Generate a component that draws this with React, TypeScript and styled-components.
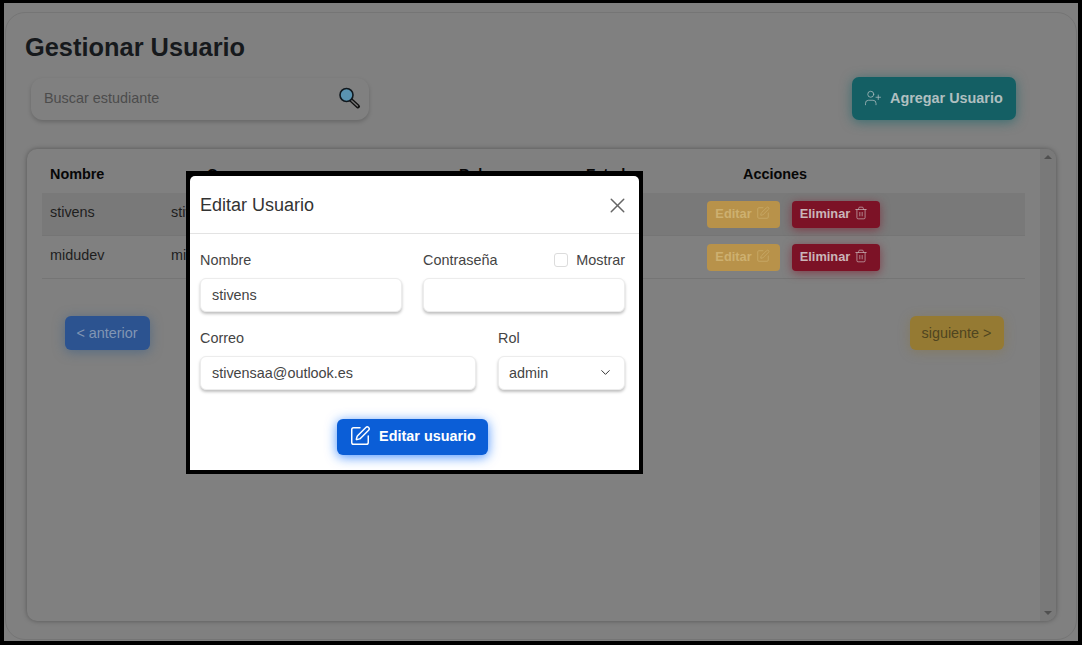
import React from 'react';
import styled, { createGlobalStyle } from 'styled-components';
import { ChevronDown, SquarePen, Trash2, UserPlus, X } from 'lucide-react';

const GlobalStyle = createGlobalStyle`
  * { box-sizing: border-box; }
  html, body { margin: 0; padding: 0; height: 100%; }
  body {
    background: #808080;
    font-family: "Liberation Sans", Arial, sans-serif;
  }
`;

const Frame = styled.div`
  position: relative;
  width: 1082px;
  height: 645px;
  overflow: hidden;
  background: #808080;
  border-style: solid;
  border-color: #000;
  border-width: 3px 4px 4px 4px;
  padding: 9px 1px 1px 1px;
`;

const Card = styled.main`
  height: 100%;
  border: 1px solid #757575;
  border-radius: 20px;
  padding: 19px 0 0 19px;
`;

const Title = styled.h1`
  margin: 0;
  font-size: 25.4px;
  line-height: 30px;
  font-weight: 700;
  color: #16191c;
`;

const Toolbar = styled.div`
  display: flex;
  justify-content: space-between;
  align-items: flex-start;
  margin-top: 15px;
  padding: 0 60px 0 6px;
`;

const SearchBox = styled.div`
  display: flex;
  align-items: center;
  justify-content: space-between;
  width: 338px;
  height: 42px;
  margin-top: 1px;
  padding: 0 8px 2px 13px;
  border-radius: 12px;
  box-shadow: 0 2px 4px rgba(0, 0, 0, 0.2);
  font-size: 14.4px;
  color: #4c4c4c;
`;

const AddButton = styled.button`
  display: flex;
  align-items: center;
  gap: 8px;
  width: 164px;
  height: 43px;
  padding: 0 0 2px 12px;
  border: 0;
  border-radius: 7px;
  background: #145f64;
  box-shadow: 0 2px 12px rgba(20, 100, 105, 0.65);
  color: #b0bfc0;
  font: 700 14.4px "Liberation Sans", Arial, sans-serif;
`;

const Panel = styled.section`
  display: flex;
  height: 472px;
  margin: 29px 20px 0 2px;
  border-radius: 10px;
  box-shadow: 0 0 5px rgba(0, 0, 0, 0.35);
  overflow: hidden;
`;

const PanelBody = styled.div`
  flex: 1;
  padding: 11px 15px 0;
`;

const Scrollbar = styled.div`
  display: flex;
  flex-direction: column;
  justify-content: space-between;
  align-items: center;
  width: 16px;
  padding: 6px 0;
  background: #797979;
`;

const Arrow = styled.span<{ $down?: boolean }>`
  width: 0;
  height: 0;
  border-left: 4px solid transparent;
  border-right: 4px solid transparent;
  ${(p) => (p.$down ? 'border-top: 4px solid #505050;' : 'border-bottom: 4px solid #505050;')}
`;

const HeadRow = styled.div`
  display: grid;
  grid-template-columns: 157px 252px 127px 157px 1fr;
  align-items: center;
  height: 33px;
  padding: 0 0 6px 8px;
  font-size: 14.4px;
  font-weight: 700;
  color: #070707;
`;

const Row = styled.div<{ $shaded?: boolean }>`
  display: grid;
  grid-template-columns: 121px 230px 100px 206px 1fr;
  align-items: center;
  height: 43px;
  padding: 0 0 0 8px;
  border-bottom: 1px solid #757575;
  background: ${(p) => (p.$shaded ? '#797979' : 'transparent')};
  font-size: 14.4px;
  color: #1e1e1e;
`;

const Cell = styled.span`
  margin-bottom: 4px;
`;

const Actions = styled.div`
  display: flex;
  gap: 12px;
`;

const ActionButton = styled.button<{ $tone: 'edit' | 'delete' }>`
  display: flex;
  align-items: center;
  justify-content: center;
  gap: 4px;
  width: ${(p) => (p.$tone === 'edit' ? '73px' : '88px')};
  height: 27px;
  padding: 0 ${(p) => (p.$tone === 'edit' ? '2px' : '4px')} 2px 0;
  border: 0;
  border-radius: 4px;
  background: ${(p) => (p.$tone === 'edit' ? '#b8924a' : '#7c1226')};
  box-shadow: ${(p) => (p.$tone === 'edit' ? 'none' : '0 2px 10px rgba(130, 20, 40, 0.6)')};
  color: ${(p) => (p.$tone === 'edit' ? '#cdb070' : '#cab6b9')};
  font: 700 12.8px "Liberation Sans", Arial, sans-serif;
`;

const Pager = styled.div`
  display: flex;
  justify-content: space-between;
  margin-top: 37px;
  padding: 0 21px 0 23px;
`;

const PageButton = styled.button<{ $next?: boolean }>`
  width: ${(p) => (p.$next ? '94px' : '85px')};
  height: 34px;
  padding: 0 ${(p) => (p.$next ? '1px' : '1px')} 0 0;
  border: 0;
  border-radius: 6px;
  background: ${(p) => (p.$next ? '#957a33' : '#2c5390')};
  box-shadow: 0 2px 12px ${(p) => (p.$next ? 'rgba(140, 115, 50, 0.4)' : 'rgba(40, 85, 135, 0.5)')};
  color: ${(p) => (p.$next ? '#4f4520' : '#8296b4')};
  font: 14.4px "Liberation Sans", Arial, sans-serif;
`;

const Modal = styled.div`
  position: absolute;
  left: 182px;
  top: 168px;
  width: 457px;
  height: 303px;
  background: #000;
  padding: 5px 4px 4px;
`;

const ModalInner = styled.form`
  height: 100%;
  border-radius: 5px 5px 0 0;
  background: #fff;
`;

const ModalHeader = styled.header`
  display: flex;
  align-items: center;
  justify-content: space-between;
  height: 58px;
  padding: 1px 9px 0 10px;
  border-bottom: 1px solid #e3e3e3;
  font-size: 18px;
  color: #333;
`;

const ModalBody = styled.div`
  display: flex;
  flex-direction: column;
  gap: 15px;
  padding: 15px 14px 0 10px;
`;

const FieldRow = styled.div<{ $columns: string; $gap: number }>`
  display: grid;
  grid-template-columns: ${(p) => p.$columns};
  column-gap: ${(p) => p.$gap}px;
`;

const LabelLine = styled.div`
  display: flex;
  align-items: center;
  justify-content: space-between;
  height: 20px;
  margin-bottom: 9px;
  padding-top: 1px;
  font-size: 14.4px;
  color: #444;
`;

const ShowToggle = styled.span`
  display: flex;
  align-items: center;
  gap: 8px;
`;

const Checkbox = styled.span`
  width: 14px;
  height: 14px;
  margin-left: -1px;
  border: 1px solid #dcdcdc;
  border-radius: 3px;
`;

const TextBox = styled.div`
  display: flex;
  align-items: center;
  justify-content: space-between;
  height: 34px;
  padding: 0 11px 1px;
  border: 1px solid #ececec;
  border-radius: 6px;
  background: #fff;
  box-shadow: 0 2px 3px rgba(0, 0, 0, 0.25);
  font-size: 14.4px;
  color: #444;
`;

const SelectBox = styled(TextBox)`
  padding-left: 10px;
`;

const SubmitRow = styled.div`
  display: flex;
  justify-content: center;
  margin-top: 29px;
  padding-right: 4px;
`;

const SubmitButton = styled.button`
  display: flex;
  align-items: center;
  justify-content: center;
  gap: 8px;
  width: 151px;
  height: 36px;
  padding: 0 0 2px;
  border: 0;
  border-radius: 6px;
  background: #0b5ed7;
  box-shadow: 0 2px 12px rgba(13, 110, 253, 0.75);
  color: #fff;
  font: 700 14.4px "Liberation Sans", Arial, sans-serif;
`;

const SearchIcon = () => (
  <svg width="24" height="24" viewBox="0 0 24 24">
    <line x1="14" y1="14" x2="21" y2="20.5" stroke="#111" strokeWidth="4" strokeLinecap="round" />
    <line x1="14.5" y1="14.5" x2="20.5" y2="20" stroke="#777" strokeWidth="1.4" strokeLinecap="round" />
    <circle cx="9.5" cy="9" r="6.5" fill="#5a93b0" stroke="#10181e" strokeWidth="1.6" />
  </svg>
);

const usuarios = [
  { nombre: 'stivens', correo: 'stivensaa@outlook.es', rol: 'admin', estado: 'Activo', shaded: true },
  { nombre: 'midudev', correo: 'midudev@gmail.com', rol: 'admin', estado: 'Activo', shaded: false },
];

const App: React.FC = () => {
  return (
    <Frame>
      <GlobalStyle />
      <Card>
        <Title>Gestionar Usuario</Title>
        <Toolbar>
          <SearchBox>
            Buscar estudiante
            <SearchIcon />
          </SearchBox>
          <AddButton>
            <UserPlus size={18} strokeWidth={1} />
            Agregar Usuario
          </AddButton>
        </Toolbar>
        <Panel>
          <PanelBody>
            <HeadRow>
              <span>Nombre</span>
              <span>Correo</span>
              <span>Rol</span>
              <span>Estado</span>
              <span>Acciones</span>
            </HeadRow>
            {usuarios.map((u) => (
              <Row key={u.nombre} $shaded={u.shaded}>
                <Cell>{u.nombre}</Cell>
                <Cell>{u.correo}</Cell>
                <Cell>{u.rol}</Cell>
                <Cell>{u.estado}</Cell>
                <Actions>
                  <ActionButton $tone="edit">
                    Editar <SquarePen size={14} strokeWidth={1.2} />
                  </ActionButton>
                  <ActionButton $tone="delete">
                    Eliminar <Trash2 size={14} strokeWidth={1.2} />
                  </ActionButton>
                </Actions>
              </Row>
            ))}
            <Pager>
              <PageButton>&lt; anterior</PageButton>
              <PageButton $next>siguiente &gt;</PageButton>
            </Pager>
          </PanelBody>
          <Scrollbar>
            <Arrow />
            <Arrow $down />
          </Scrollbar>
        </Panel>
      </Card>

      <Modal>
        <ModalInner>
          <ModalHeader>
            Editar Usuario
            <X size={25} strokeWidth={1.4} color="#666" />
          </ModalHeader>
          <ModalBody>
            <FieldRow $columns="202px 202px" $gap={21}>
              <div>
                <LabelLine>Nombre</LabelLine>
                <TextBox>stivens</TextBox>
              </div>
              <div>
                <LabelLine>
                  Contraseña
                  <ShowToggle>
                    <Checkbox />
                    Mostrar
                  </ShowToggle>
                </LabelLine>
                <TextBox />
              </div>
            </FieldRow>
            <FieldRow $columns="276px 127px" $gap={22}>
              <div>
                <LabelLine>Correo</LabelLine>
                <TextBox>stivensaa@outlook.es</TextBox>
              </div>
              <div>
                <LabelLine>Rol</LabelLine>
                <SelectBox>
                  admin
                  <ChevronDown size={15} strokeWidth={1.6} color="#333" />
                </SelectBox>
              </div>
            </FieldRow>
          </ModalBody>
          <SubmitRow>
            <SubmitButton type="button">
              <SquarePen size={22} strokeWidth={1.6} />
              Editar usuario
            </SubmitButton>
          </SubmitRow>
        </ModalInner>
      </Modal>
    </Frame>
  );
};

export default App;
